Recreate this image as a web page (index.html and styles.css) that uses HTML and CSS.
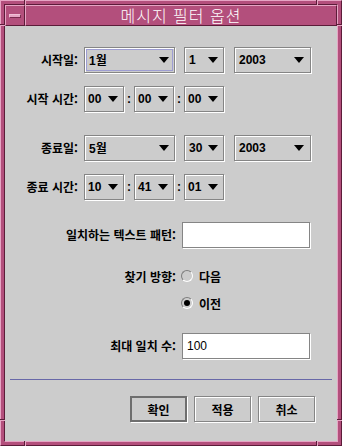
FILE: index.html
```html
<!DOCTYPE html>
<html lang="ko">
<head>
<meta charset="utf-8">
<title>메시지 필터 옵션</title>
<link rel="stylesheet" href="styles.css">
</head>
<body>
<div class="window">
  <span class="tick tick-v tick-top-l"></span>
  <span class="tick tick-v tick-top-r"></span>
  <span class="tick tick-v tick-bot-l"></span>
  <span class="tick tick-v tick-bot-r"></span>
  <span class="tick tick-h tick-left-t"></span>
  <span class="tick tick-h tick-left-b"></span>
  <span class="tick tick-h tick-right-t"></span>
  <span class="tick tick-h tick-right-b"></span>
  <div class="frame">
    <div class="titlebar">
      <div class="menu-btn"><span class="menu-bar"></span></div>
      <div class="title">메시지 필터 옵션</div>
    </div>
    <div class="content">
      <div class="row row-1">
        <span class="lbl lbl-a">시작일:</span>
        <div class="combo month focus"><span>1월</span><i class="arrow"></i></div>
        <div class="combo day"><span>1</span><i class="arrow"></i></div>
        <div class="combo year"><span>2003</span><i class="arrow"></i></div>
      </div>
      <div class="row row-2">
        <span class="lbl lbl-a">시작 시간:</span>
        <div class="combo time"><span>00</span><i class="arrow"></i></div>
        <span class="colon">:</span>
        <div class="combo time"><span>00</span><i class="arrow"></i></div>
        <span class="colon">:</span>
        <div class="combo time"><span>00</span><i class="arrow"></i></div>
      </div>
      <div class="row row-3">
        <span class="lbl lbl-a">종료일:</span>
        <div class="combo month"><span>5월</span><i class="arrow"></i></div>
        <div class="combo day"><span>30</span><i class="arrow"></i></div>
        <div class="combo year"><span>2003</span><i class="arrow"></i></div>
      </div>
      <div class="row row-4">
        <span class="lbl lbl-a">종료 시간:</span>
        <div class="combo time"><span>10</span><i class="arrow"></i></div>
        <span class="colon">:</span>
        <div class="combo time"><span>41</span><i class="arrow"></i></div>
        <span class="colon">:</span>
        <div class="combo time"><span>01</span><i class="arrow"></i></div>
      </div>
      <div class="row row-5">
        <span class="lbl lbl-b">일치하는 텍스트 패턴:</span>
        <div class="field"></div>
      </div>
      <div class="row radio-row row-6">
        <span class="lbl lbl-b">찾기 방향:</span>
        <span class="radio"></span>
        <span class="radio-text">다음</span>
      </div>
      <div class="row radio-row row-7">
        <span class="lbl lbl-b"></span>
        <span class="radio checked"></span>
        <span class="radio-text">이전</span>
      </div>
      <div class="row row-8">
        <span class="lbl lbl-b">최대 일치 수:</span>
        <div class="field">100</div>
      </div>
      <div class="separator"></div>
      <div class="buttons">
        <div class="btn default">확인</div>
        <div class="btn">적용</div>
        <div class="btn">취소</div>
      </div>
    </div>
  </div>
</div>
</body>
</html>
```

FILE: styles.css
```css
html, body {
  margin: 0;
  padding: 0;
  background: #cccccc;
}

.window {
  position: relative;
  width: 342px;
  height: 446px;
  box-sizing: border-box;
  background: #b34f7c;
  border: 1px solid;
  border-color: #e6a5c4 #5c1c39 #5c1c39 #e6a5c4;
  padding: 3px;
  display: flex;
  font-family: "Liberation Sans", "Noto Sans CJK KR", sans-serif;
}

.tick {
  position: absolute;
  box-sizing: border-box;
}
.tick-v {
  width: 2px;
  height: 5px;
  border-left: 1px solid #5c1c39;
  border-right: 1px solid #e6a5c4;
}
.tick-h {
  width: 5px;
  height: 2px;
  border-top: 1px solid #5c1c39;
  border-bottom: 1px solid #e6a5c4;
}
.tick-top-l { top: -1px; left: 23px; }
.tick-top-r { top: -1px; left: 315px; }
.tick-bot-l { bottom: -1px; left: 23px; }
.tick-bot-r { bottom: -1px; left: 315px; }
.tick-left-t { left: -1px; top: 23px; }
.tick-left-b { left: -1px; top: 418px; }
.tick-right-t { right: -1px; top: 23px; }
.tick-right-b { right: -1px; top: 418px; }

.frame {
  flex: 1;
  display: flex;
  flex-direction: column;
  border: 1px solid;
  border-color: #5c1c39 #e6a5c4 #e6a5c4 #5c1c39;
}

.titlebar {
  height: 21px;
  display: flex;
  flex: none;
}

.menu-btn {
  width: 20px;
  box-sizing: border-box;
  border: 1px solid;
  border-color: #e6a5c4 #5c1c39 #5c1c39 #e6a5c4;
  display: flex;
  align-items: center;
  justify-content: center;
}
.menu-bar {
  width: 12px;
  height: 4px;
  box-sizing: border-box;
  background: #e6a5c4;
  border: 1px solid;
  border-color: #f0c0d6 #7a2a4e #7a2a4e #f0c0d6;
}

.title {
  flex: 1;
  box-sizing: border-box;
  border: 1px solid;
  border-color: #e6a5c4 #5c1c39 #5c1c39 #e6a5c4;
  color: #ffffff;
  font-family: "Noto Sans CJK KR", sans-serif;
  font-size: 16px;
  font-weight: 300;
  letter-spacing: 1px;
  line-height: 19px;
  text-align: center;
}

.content {
  flex: 1;
  background: #cccccc;
  display: flex;
  flex-direction: column;
  padding-top: 20px;
}

.row {
  display: flex;
  align-items: center;
  height: 27px;
  font-size: 12px;
  font-weight: bold;
  color: #000;
}
.row-2 { margin-top: 12px; }
.row-3 { margin-top: 22px; }
.row-4 { margin-top: 12px; }
.row-5 { margin-top: 21px; height: 27px; }
.row-6 { margin-top: 18px; height: 20px; }
.row-7 { margin-top: 7px; height: 20px; }
.row-8 { margin-top: 19px; }

.lbl {
  text-align: right;
  white-space: nowrap;
  font-family: "Noto Sans CJK KR", sans-serif;
  font-size: 12px;
  font-weight: bold;
  margin-right: 6px;
  flex: none;
}
.lbl-a { width: 73px; }
.lbl-b { width: 171px; }

.combo {
  box-sizing: border-box;
  height: 26px;
  border: 1px solid #858585;
  box-shadow: inset 1px 1px #ffffff, 1px 1px #ffffff;
  display: flex;
  align-items: center;
  justify-content: space-between;
  padding: 0 5px 0 4px;
  flex: none;
}
.combo span {
  font-family: "Liberation Sans", "Noto Sans CJK KR", sans-serif;
  font-size: 12px;
  font-weight: bold;
}
.combo.focus {
  outline: 1px solid #9d9dd2;
  outline-offset: -3px;
}
.month { width: 91px; }
.day { width: 40px; margin-left: 9px; }
.year { width: 77px; margin-left: 10px; padding-right: 6px; }
.time { width: 40px; padding-left: 3px; }

.arrow {
  width: 0;
  height: 0;
  border-left: 5px solid transparent;
  border-right: 5px solid transparent;
  border-top: 6px solid #000;
  margin-top: 1px;
}

.colon {
  width: 10px;
  text-align: center;
  font-size: 12px;
  font-weight: bold;
}

.field {
  box-sizing: border-box;
  width: 128px;
  height: 26px;
  background: #ffffff;
  border: 1px solid #858585;
  box-shadow: 1px 1px #ffffff;
  font-weight: normal;
  font-size: 12px;
  line-height: 24px;
  padding-left: 4px;
}

.radio {
  box-sizing: border-box;
  width: 12px;
  height: 12px;
  border-radius: 50%;
  border: 1px solid;
  border-color: #7d7d7d #ffffff #ffffff #7d7d7d;
  background: #cccccc;
  display: flex;
  align-items: center;
  justify-content: center;
  flex: none;
}
.radio.checked::after {
  content: "";
  width: 6px;
  height: 6px;
  border-radius: 50%;
  background: #000;
}
.radio-row .lbl-b { margin-right: 5px; }
.radio-text {
  margin-left: 6px;
  font-family: "Noto Sans CJK KR", sans-serif;
  font-size: 12px;
  font-weight: bold;
}

.separator {
  margin: 20px 5px 0 5px;
  height: 1px;
  background: #6868a8;
}

.buttons {
  display: flex;
  justify-content: flex-end;
  gap: 7px;
  margin-top: 16px;
  padding-right: 22px;
}
.btn {
  box-sizing: border-box;
  width: 57px;
  height: 26px;
  border: 1px solid #858585;
  box-shadow: inset 1px 1px #ffffff, 1px 1px #ffffff;
  display: flex;
  align-items: center;
  justify-content: center;
  font-family: "Noto Sans CJK KR", sans-serif;
  font-size: 12px;
  font-weight: bold;
}
.btn.default {
  border: 2px solid #6e6e6e;
  box-shadow: 1px 1px #ffffff;
}
```
